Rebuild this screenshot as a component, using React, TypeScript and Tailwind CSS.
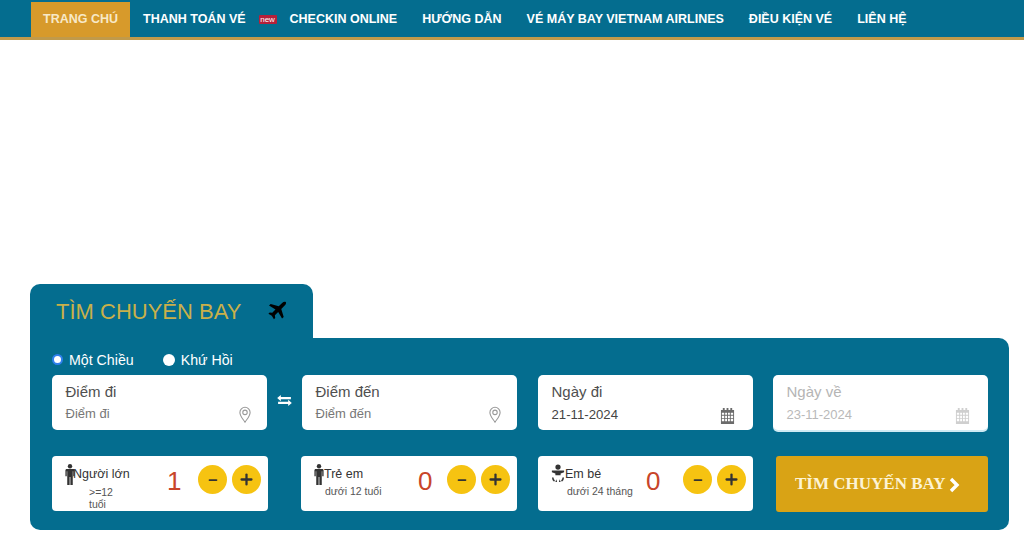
import React from "react";
import { Minus, Plus } from "lucide-react";

const PlaneIcon = () => (
  <svg viewBox="0 0 24 24" className="w-[21px] h-[21px] fill-black">
    <path d="M21.6 1.3c-1-.9-3-.4-4.3.9l-3.9 3.9L4.2 3.3 2.3 5.2l7.4 4.4-3.7 3.8-2.9-.4-1.5 1.5 3.9 2.4 2.4 3.9 1.5-1.5-.4-2.9 3.8-3.7 4.4 7.4 1.9-1.9-2.8-9.2 3.9-3.9c1.3-1.3 2.1-3.2 1.3-4.1z" />
  </svg>
);

const Pin = () => (
  <svg viewBox="0 0 16 20" className="w-[14px] h-[17px] fill-none stroke-[#9a9a9a]" strokeWidth="1.3">
    <path d="M8 19C5 14.5 2 11.5 2 7.5a6 6 0 0 1 12 0C14 11.5 11 14.5 8 19z" />
    <circle cx="8" cy="7.5" r="2.6" />
  </svg>
);

const Calendar = ({ light }: { light?: boolean }) => (
  <svg viewBox="0 0 16 17" className={light ? "w-[15px] h-[16px] fill-[#cfcfcf]" : "w-[15px] h-[16px] fill-[#6b6b6b]"}>
    <path d="M3 0h2v3H3zM7 0h2v3H7zM11 0h2v3h-2z" />
    <path fillRule="evenodd" d="M1 2h14v15H1zM2 5v2.2h2.5V5zm3.5 0v2.2h2V5zm3 0v2.2h2V5zm3 0v2.2H14V5zM2 8.2v2.3h2.5V8.2zm3.5 0v2.3h2V8.2zm3 0v2.3h2V8.2zm3 0v2.3H14V8.2zM2 11.5V14h2.5v-2.5zm3.5 0V14h2v-2.5zm3 0V14h2v-2.5zm3 0V14H14v-2.5z" />
  </svg>
);

const Swap = () => (
  <svg viewBox="0 0 16 12" className="w-[15px] h-[11px] fill-white">
    <path d="M4 0v2.2h11v2.4H4v2.2L0 3.4zM12 5.2v2.2H1v2.4h11V12l4-3.4z" />
  </svg>
);

const Chevron = () => (
  <svg viewBox="0 0 12 16" className="w-[12px] h-[16px] ml-[2px] mt-[1px] fill-none stroke-white" strokeWidth="3.4">
    <path d="M3 2l6 6-6 6" />
  </svg>
);

const Adult = ({ className }: { className: string }) => (
  <svg viewBox="0 0 10 22" className={className}>
    <circle cx="5" cy="2.3" r="2.3" fill="#333" />
    <path d="M1.6 5.2h6.8c.8 0 1.4.6 1.4 1.4v6.2H8.4V7.6h-.5V22H5.4v-8.4h-.8V22H2.1V7.6h-.5v5.2H.2V6.6c0-.8.6-1.4 1.4-1.4z" fill="#333" />
  </svg>
);

const Baby = () => (
  <svg viewBox="0 0 16 22" className="w-[14px] h-[20px] shrink-0">
    <circle cx="8" cy="3" r="3" fill="#333" />
    <path d="M1 7h14v2l-4 1.5v2H5v-2L1 9z" fill="#333" />
    <path d="M2 15c0 2 .5 3 2 4M14 15c0 2-.5 3-2 4" fill="none" stroke="#333" strokeWidth="1.8" />
    <path d="M5 20h2l-1-3zM11 20H9l1-3z" fill="#333" />
  </svg>
);

const Field = ({ label, value, icon, muted, valueDark, className }: { label: string; value: string; icon: React.ReactNode; muted?: boolean; valueDark?: boolean; className: string }) => (
  <div className={`${className} h-[55px] bg-white rounded-[5px] relative pl-[13.5px] pt-[7px]`}>
    <div className={muted ? "text-[15px] leading-[20px] text-[#b5b5b5]" : "text-[15px] leading-[20px] text-[#4f4f4f]"}>{label}</div>
    <div className={muted ? "text-[13px] leading-[16px] mt-[5px] text-[#b9b9b9]" : valueDark ? "text-[13.2px] leading-[16px] mt-[5px] text-[#444]" : "text-[13px] font-medium leading-[16px] mt-[4px] text-[#777]"}>{value}</div>
    <div className={muted || valueDark ? "absolute right-[18px] bottom-[6px]" : "absolute right-[15px] bottom-[7px]"}>{icon}</div>
  </div>
);

const Round = ({ children }: { children: React.ReactNode }) => (
  <div className="w-[29px] h-[29px] rounded-full bg-[#f6c311] flex items-center justify-center text-[#333]">{children}</div>
);

const Counter = ({ icon, title, sub, value, className, numberClass, subClass }: { icon: React.ReactNode; title: string; sub: React.ReactNode; value: string; className: string; numberClass: string; subClass: string }) => (
  <div className={`${className} h-[55px] bg-white rounded-[4px] flex items-start pl-[13px]`}>
    <div className="w-[107px] pt-[8px] shrink-0">
      <div className="flex items-center h-[20px] text-[12.5px] font-medium text-[#333]">
        {icon}
        <span>{title}</span>
      </div>
      <div className={subClass}>{sub}</div>
    </div>
    <div className={numberClass}>{value}</div>
    <div className="flex gap-[5px] mt-[9px]">
      <Round><Minus size={12} strokeWidth={3.5} /></Round>
      <Round><Plus size={17} strokeWidth={3.2} /></Round>
    </div>
  </div>
);

const nav = ["THANH TOÁN VÉ", "new", "CHECKIN ONLINE", "HƯỚNG DẪN", "VÉ MÁY BAY VIETNAM AIRLINES", "ĐIỀU KIỆN VÉ", "LIÊN HỆ"];

export default function App() {
  return (
    <div className="w-[1024px] h-[541px] bg-white overflow-hidden font-['Liberation_Sans',Arial,sans-serif]">
      <nav className="h-[40px] bg-[#046d8f] border-b-[3px] border-[#c19a4a] flex items-end pl-[31px]">
        <div className="h-[35px] w-[99px] bg-[#d79a2b] text-[#f7e9c8] text-[12.5px] font-bold flex items-center justify-center">TRANG CHÚ</div>
        <div className="flex items-center h-[37px] pl-[13px] pt-[1px] text-white text-[12.5px] font-bold">
          {nav.map((n, i) =>
            n === "new" ? (
              <span key={n} className="ml-[13px] mr-[13px] w-[18px] h-[9px] bg-[#b5203a] text-white text-[8px] font-normal leading-[9px] text-center rounded-[1px]">new</span>
            ) : (
              <span key={n} className={i < 3 ? "" : "ml-[25px]"}>{n}</span>
            )
          )}
        </div>
      </nav>

      <section className="ml-[30px] mt-[244px] w-[979px]">
        <div className="w-[283px] h-[54px] bg-[#046d8f] rounded-t-[10px] flex items-center pl-[26px]">
          <span className="text-[22px] text-[#c9b04a]">TÌM CHUYẾN BAY</span>
          <span className="ml-[26px]"><PlaneIcon /></span>
        </div>
        <div className="h-[192px] bg-[#046d8f] rounded-b-[10px] rounded-tr-[10px] pl-[22px]">
          <div className="h-[37px] flex items-end pb-[7px] text-[14.2px] leading-[16px] text-white">
            <span className="w-[11px] h-[11px] rounded-full bg-white border-[2px] border-[#2f80ed] mb-[3px]" />
            <span className="ml-[6px]">Một Chiều</span>
            <span className="ml-[29px] w-[12px] h-[12px] rounded-full bg-white mb-[2px]" />
            <span className="ml-[6px]">Khứ Hồi</span>
          </div>
          <div className="flex items-start">
            <Field className="w-[215px]" label="Điểm đi" value="Điểm đi" icon={<Pin />} />
            <div className="w-[35px] h-[50px] flex items-center justify-center"><Swap /></div>
            <Field className="w-[215px]" label="Điểm đến" value="Điểm đến" icon={<Pin />} />
            <Field className="w-[215px] ml-[21px]" label="Ngày đi" value="21-11-2024" valueDark icon={<Calendar />} />
            <Field className="w-[215px] ml-[20px] shadow-[0_2px_0_#cfeaf3]" label="Ngày về" value="23-11-2024" muted icon={<Calendar light />} />
          </div>
          <div className="flex items-start mt-[26px]">
            <Counter
              className="w-[216px]"
              icon={<Adult className="w-[10px] h-[21px] shrink-0 -mr-[2px]" />}
              title="Người lớn"
              sub={<>&gt;=12<br />tuổi</>}
              subClass="text-[10.5px] leading-[12px] text-[#555] pl-[24px] mt-[2px]"
              value="1"
              numberClass="text-[26px] leading-[50px] text-[#c8452a] w-[26px] shrink-0 -ml-[5px] mr-[5px]"
            />
            <Counter
              className="w-[216px] ml-[33px]"
              icon={<Adult className="w-[10px] h-[21px] shrink-0 mr-[0px]" />}
              title="Trẻ em"
              sub="dưới 12 tuổi"
              subClass="text-[10.5px] leading-[12px] text-[#555] pl-[11px] mt-[1px]"
              value="0"
              numberClass="text-[26px] leading-[50px] text-[#c8452a] w-[26px] shrink-0 -ml-[3px] mr-[3px]"
            />
            <Counter
              className="w-[215px] ml-[21px]"
              icon={<Baby />}
              title="Em bé"
              sub="dưới 24 tháng"
              subClass="text-[10.5px] leading-[12px] text-[#555] pl-[16px] mt-[1px]"
              value="0"
              numberClass="text-[26px] leading-[50px] text-[#c8452a] w-[29px] shrink-0 -ml-[12px] mr-[8px]"
            />
            <button className="w-[212px] h-[56px] ml-[23px] bg-[#d9a315] rounded-[3px] flex items-center pl-[19px] text-[#fdf3d4] font-['Liberation_Serif',serif] font-bold text-[17px]">
              <span>TÌM CHUYẾN BAY</span>
              <Chevron />
            </button>
          </div>
        </div>
      </section>
    </div>
  );
}
